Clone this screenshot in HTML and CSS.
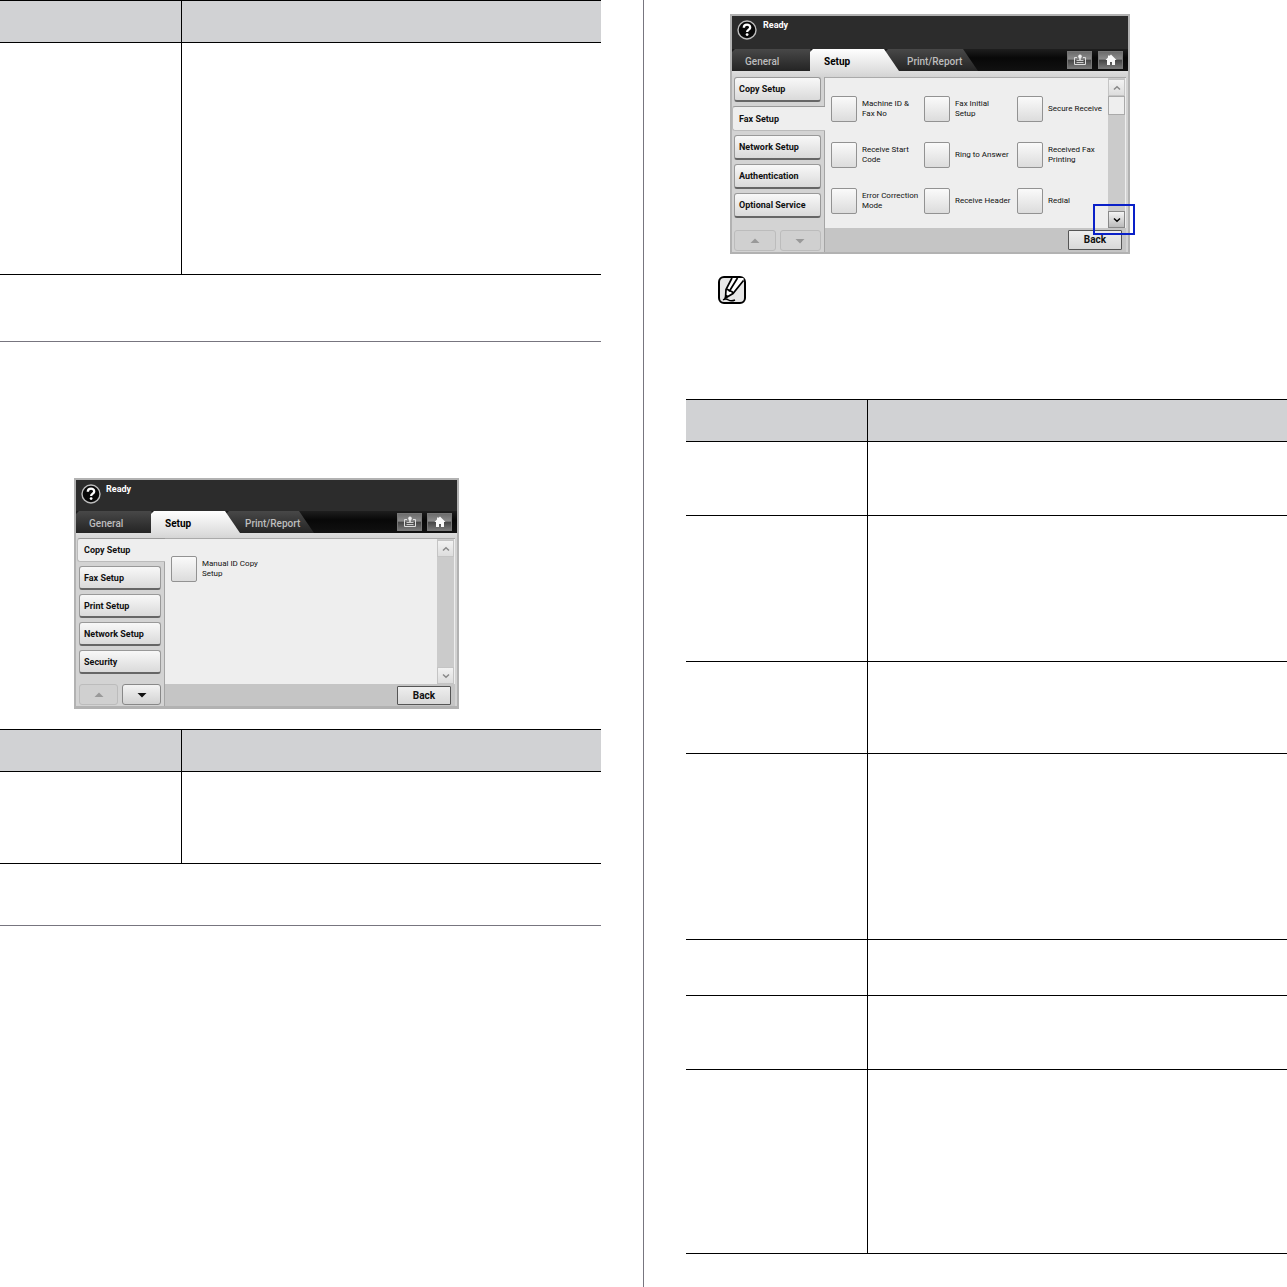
FILE: index.html
```
<!DOCTYPE html>
<html lang="en">
  <head>
    <meta charset="UTF-8" />
    <meta name="viewport" content="width=device-width, initial-scale=1.0" />
    <title>Machine Setup</title>
    <link rel="stylesheet" href="styles.css">
  </head>
  <body>
    <!-- shared icons -->
    <svg class="sprite" aria-hidden="true">
      <symbol id="help" viewBox="0 0 20 20">
        <circle cx="10" cy="10" r="9" fill="#080808" stroke="#bdbdbd" stroke-width="1.4" />
        <path d="M6.8 7.7C6.9 3.6 13.3 3.7 13.2 7.6C13.1 9.6 10.2 9.7 10.1 12" fill="none" stroke="#fff" stroke-width="2.3" />
        <circle cx="10.1" cy="14.6" r="1.4" fill="#fff" />
      </symbol>
      <symbol id="status" viewBox="0 0 14 12">
        <path d="M4 3.5H1.5V10.5H12.5V3.5H10" fill="none" stroke="#ddd" />
        <path d="M7 2V6" fill="none" stroke="#eee" stroke-width="1.4" />
        <circle cx="7" cy="2.4" r="1.8" fill="#eee" />
        <path d="M3.5 6.5H10.5M3.5 8.5H10.5" stroke="#ccc" />
      </symbol>
      <symbol id="home" viewBox="0 0 14 12">
        <path d="M7 0.5L12.5 6H11V11H8V8H6V11H3V6H1.5L4 3.5V1.5H5.5V2Z" fill="#fafafa" />
      </symbol>
      <symbol id="up" viewBox="0 0 10 6">
        <path d="M5 0.5L9.5 5H0.5Z" fill="currentColor" />
      </symbol>
      <symbol id="down" viewBox="0 0 10 6">
        <path d="M5 5.5L9.5 1H0.5Z" fill="currentColor" />
      </symbol>
      <symbol id="chevron-up" viewBox="0 0 8 6">
        <path d="M1 4.5L4 1.8L7 4.5" fill="none" stroke="currentColor" stroke-width="1.5" />
      </symbol>
      <symbol id="chevron-down" viewBox="0 0 8 6">
        <path d="M1 1.5L4 4.2L7 1.5" fill="none" stroke="currentColor" stroke-width="1.5" />
      </symbol>
    </svg>

    <main class="page">
      <div class="column">
        <table class="options">
          <thead>
            <tr><th class="name"></th><th></th></tr>
          </thead>
          <tbody>
            <tr class="row-232"><td></td><td></td></tr>
          </tbody>
        </table>

        <hr class="rule" />

        <section class="panel panel-copy">
          <header class="status">
            <button class="help" aria-label="Help"><svg><use href="#help" /></svg></button>
            <span>Ready</span>
          </header>
          <nav class="tabs">
            <button class="tab general">General</button>
            <button class="tab setup">Setup</button>
            <button class="tab report">Print/Report</button>
            <div class="tools">
              <button aria-label="Job status"><svg><use href="#status" /></svg></button>
              <button aria-label="Home"><svg><use href="#home" /></svg></button>
            </div>
          </nav>
          <div class="screen">
            <div class="sidebar">
              <button class="item selected">Copy Setup</button>
              <button class="item">Fax Setup</button>
              <button class="item">Print Setup</button>
              <button class="item">Network Setup</button>
              <button class="item">Security</button>
              <div class="pager">
                <button aria-label="Previous" disabled><svg><use href="#up" /></svg></button>
                <button aria-label="Next"><svg><use href="#down" /></svg></button>
              </div>
            </div>
            <div class="main">
              <div class="content">
                <div class="choices">
                  <button class="choice"><i></i><span>Manual ID Copy<br />Setup</span></button>
                </div>
                <div class="scroll">
                  <button aria-label="Scroll up"><svg><use href="#chevron-up" /></svg></button>
                  <button class="last" aria-label="Scroll down"><svg><use href="#chevron-down" /></svg></button>
                </div>
              </div>
              <footer><button class="back">Back</button></footer>
            </div>
          </div>
        </section>

        <table class="options">
          <thead>
            <tr><th class="name"></th><th></th></tr>
          </thead>
          <tbody>
            <tr class="row-92"><td></td><td></td></tr>
          </tbody>
        </table>

        <hr class="rule" />
      </div>

      <div class="column column-right">
        <section class="panel panel-fax">
          <header class="status">
            <button class="help" aria-label="Help"><svg><use href="#help" /></svg></button>
            <span>Ready</span>
          </header>
          <nav class="tabs">
            <button class="tab general">General</button>
            <button class="tab setup">Setup</button>
            <button class="tab report">Print/Report</button>
            <div class="tools">
              <button aria-label="Job status"><svg><use href="#status" /></svg></button>
              <button aria-label="Home"><svg><use href="#home" /></svg></button>
            </div>
          </nav>
          <div class="screen">
            <div class="sidebar">
              <button class="item">Copy Setup</button>
              <button class="item selected">Fax Setup</button>
              <button class="item">Network Setup</button>
              <button class="item">Authentication</button>
              <button class="item">Optional Service</button>
              <div class="pager">
                <button aria-label="Previous" disabled><svg><use href="#up" /></svg></button>
                <button aria-label="Next" disabled><svg><use href="#down" /></svg></button>
              </div>
            </div>
            <div class="main">
              <div class="content">
                <div class="choices">
                  <button class="choice"><i></i><span>Machine ID &amp;<br />Fax No</span></button>
                  <button class="choice"><i></i><span>Fax Initial<br />Setup</span></button>
                  <button class="choice"><i></i><span>Secure Receive</span></button>
                  <button class="choice"><i></i><span>Receive Start<br />Code</span></button>
                  <button class="choice"><i></i><span>Ring to Answer</span></button>
                  <button class="choice"><i></i><span>Received Fax<br />Printing</span></button>
                  <button class="choice"><i></i><span>Error Correction<br />Mode</span></button>
                  <button class="choice"><i></i><span>Receive Header</span></button>
                  <button class="choice"><i></i><span>Redial</span></button>
                </div>
                <div class="scroll">
                  <button aria-label="Scroll up"><svg><use href="#chevron-up" /></svg></button>
                  <div class="thumb"></div>
                  <button class="last active" aria-label="Scroll down"><svg><use href="#chevron-down" /></svg></button>
                </div>
              </div>
              <footer><button class="back">Back</button></footer>
            </div>
          </div>
          <div class="marker"></div>
        </section>

        <svg class="note" viewBox="0 0 28 28" role="img" aria-label="Note">
          <rect x="1" y="1" width="26" height="26" rx="5" fill="#e6e6e6" stroke="#000" stroke-width="2" />
          <path d="M14 2L8 13.5L7.5 22L15 17.5L25.5 4V2Z" fill="#fff" />
          <path d="M14 2L8 13.5L7.5 22L15 17.5L25.5 4.5M19.5 2L11.5 15M8 13.5Q10 12.8 11.5 15Q14.5 14.8 15 17.5" fill="none" stroke="#000" stroke-width="1.7" />
          <path d="M7.6 18.5L11 20.3L6 23.5Z" />
          <path d="M5 23.8Q8 22.3 10.5 24T17 24" fill="none" stroke="#000" stroke-width="1.5" />
        </svg>

        <table class="options">
          <thead>
            <tr><th class="name"></th><th></th></tr>
          </thead>
          <tbody>
            <tr class="row-74"><td></td><td></td></tr>
            <tr class="row-146"><td></td><td></td></tr>
            <tr class="row-92"><td></td><td></td></tr>
            <tr class="row-186"><td></td><td></td></tr>
            <tr class="row-56"><td></td><td></td></tr>
            <tr class="row-74"><td></td><td></td></tr>
            <tr class="row-184"><td></td><td></td></tr>
          </tbody>
        </table>
      </div>
    </main>
  </body>
</html>
```
FILE: styles.css
```
* {
  box-sizing: border-box;
}
body {
  margin: 0;
  background: #fff;
  font-family: Roboto, "Liberation Sans", sans-serif;
}
button {
  margin: 0;
  padding: 0;
  border: none;
  background: none;
  font: inherit;
  color: inherit;
  cursor: pointer;
}
svg {
  display: block;
}
.sprite {
  display: none;
}
.page {
  display: grid;
  grid-template-columns: 643fr 644fr;
  min-height: 100vh;
}
.column {
  padding-right: 42px;
}
.column-right {
  padding: 14px 0 0 42px;
  border-left: 1px solid #77757f;
}

/* tables */
.options {
  width: 100%;
  table-layout: fixed;
  border-spacing: 0;
}
.options th,
.options td {
  padding: 0;
  border-bottom: 1px solid #000;
}
.options th {
  height: 43px;
  background: #d1d2d4;
  border-top: 1px solid #000;
}
.options .name {
  width: 181px;
}
.options th + th,
.options td + td {
  border-left: 1px solid #000;
}
.row-56 {
  height: 56px;
}
.row-74 {
  height: 74px;
}
.row-92 {
  height: 92px;
}
.row-146 {
  height: 146px;
}
.row-184 {
  height: 184px;
}
.row-186 {
  height: 186px;
}
.row-232 {
  height: 232px;
}
.rule {
  height: 1px;
  margin: 66px 0 0;
  border: none;
  background: #77757f;
}
.panel + .options + .rule {
  margin-top: 61px;
}
.note {
  width: 28px;
  height: 28px;
  margin: 22px 0 95px 32px;
}

/* machine display */
.panel {
  position: relative;
  border: 2px solid #b2b2b2;
  background: #d3d3d3;
  font-size: 9px;
  line-height: 10px;
  color: #111;
}
.panel-copy {
  max-width: 385px;
  margin: 136px 0 20px 74px;
  border-bottom-width: 3px;
}
.panel-fax {
  max-width: 400px;
  margin-left: 44px;
}
.status {
  display: flex;
  align-items: flex-start;
  gap: 5px;
  height: 31px;
  padding: 4px 5px;
  background: #2c2c2c;
  color: #fff;
  font-weight: bold;
}
.help svg {
  width: 20px;
  height: 20px;
}
.panel-fax .status {
  gap: 6px;
  height: 33px;
}
.tabs {
  display: flex;
  height: 22px;
  background: linear-gradient(#1e1e1e, #080808 40%, #111);
}
.tab {
  height: 22px;
  padding-top: 4px;
  text-align: left;
  font-size: 10px;
  line-height: 16px;
  font-weight: 500;
  color: #bdbdbd;
  background: linear-gradient(#484848, #242424);
  clip-path: polygon(0 3px, 3px 0, calc(100% - 15px) 0, 100% 100%, 0 100%);
}
.general {
  width: 90px;
  padding-left: 13px;
}
.setup {
  width: 89px;
  margin-left: -15px;
  padding-left: 14px;
  color: #000;
  font-weight: bold;
  background: linear-gradient(#fff, #dedede);
  z-index: 1;
}
.report {
  width: 88px;
  margin-left: -14px;
  padding-left: 19px;
}
.panel-fax .general {
  width: 93px;
}
.panel-fax .report {
  width: 93px;
  padding-left: 22px;
}
.tools {
  display: flex;
  gap: 5px;
  margin-left: auto;
  padding: 2px 5px;
}
.tools button {
  display: grid;
  place-items: center;
  width: 25px;
  height: 18px;
  border: 1px solid #777;
  background: linear-gradient(#6d6d6d, #8c8c8c 45%, #454545 50%, #777);
}
.tools svg {
  width: 14px;
  height: 12px;
}
.panel-fax .tools {
  gap: 6px;
}
.screen {
  display: grid;
  grid-template-columns: 88px 1fr;
  padding: 5px 2px 0 0;
  background: linear-gradient(#dedede, #d3d3d3 6px);
}
.panel-fax .screen {
  grid-template-columns: 92px 1fr;
  padding-top: 6px;
}
.sidebar {
  display: flex;
  flex-direction: column;
  gap: 4px;
  padding: 0 3px;
}
.panel-fax .sidebar {
  padding-left: 2px;
}
.item {
  height: 24px;
  padding: 0 0 0 4px;
  border: 1px solid #999;
  border-bottom: 2px solid #666;
  border-radius: 3px;
  text-align: left;
  font-weight: bold;
  background: linear-gradient(#f8f8f8, #dadada);
}
.panel-fax .item {
  height: 25px;
}
.sidebar .selected {
  margin: 0 -4px 0 -2px;
  padding-left: 6px;
  border: 1px solid #bbb;
  border-top-color: #999;
  border-right: none;
  border-radius: 3px 0 0 3px;
  background: #eee;
  z-index: 1;
}
.pager {
  display: flex;
  gap: 4px;
  margin-top: auto;
  padding-bottom: 1px;
}
.pager button {
  flex: 1;
  display: grid;
  place-items: center;
  height: 21px;
  border: 1px solid #888;
  border-radius: 3px;
  background: linear-gradient(#f3f3f3, #d2d2d2);
}
.pager button:disabled {
  border-color: #bcbcbc;
  background: #d0d0d0;
  color: #999;
}
.pager svg {
  width: 10px;
  height: 6px;
}
.main {
  border-left: 1px solid #a5a5a5;
}
.content {
  display: flex;
  height: 146px;
  padding-right: 1px;
  border-top: 1px solid #aaa;
  background: #eee;
}
.panel-fax .content {
  height: 151px;
}
.choices {
  flex: 1;
  display: grid;
  grid-template-columns: 93px 93px 1fr;
  grid-auto-rows: 25px;
  row-gap: 21px;
  padding: 17px 0 0 6px;
}
.panel-fax .choices {
  padding-top: 18px;
}
.choice {
  display: flex;
  align-items: center;
  gap: 5px;
  text-align: left;
  font-size: 8px;
  white-space: nowrap;
}
.choice i {
  flex: none;
  width: 26px;
  height: 26px;
  border: 1px solid #929292;
  border-radius: 2px;
  background: linear-gradient(#fafafa, #dcdcdc);
}
.scroll {
  display: flex;
  flex-direction: column;
  width: 17px;
  padding-top: 1px;
  background: #cbcbcb;
}
.scroll button {
  display: grid;
  place-items: center;
  height: 17px;
  border: 1px solid #c4c4c4;
  background: linear-gradient(#f2f2f2, #ddd);
  color: #888;
}
.scroll svg {
  width: 8px;
  height: 6px;
}
.scroll .last {
  margin-top: auto;
}
.scroll .active {
  border-color: #888;
  background: linear-gradient(#f4f4f4, #bbb);
  color: #000;
}
.thumb {
  height: 19px;
  border: 1px solid #aaa;
  background: #eee;
}
.main footer {
  display: flex;
  justify-content: flex-end;
  height: 22px;
  padding: 2px 4px;
  background: #c5c5c5;
}
.panel-fax footer {
  height: 24px;
}
.back {
  width: 54px;
  height: 19px;
  border: 1px solid #555;
  border-radius: 1px;
  font-size: 10px;
  font-weight: bold;
  background: linear-gradient(#eee, #d8d8d8);
}
.panel-fax .back {
  height: 20px;
}

/* frame round the scroll button */
.marker {
  position: absolute;
  right: -7px;
  bottom: 17px;
  width: 42px;
  height: 31px;
  border: 2px solid #0a20c8;
  pointer-events: none;
}
```
